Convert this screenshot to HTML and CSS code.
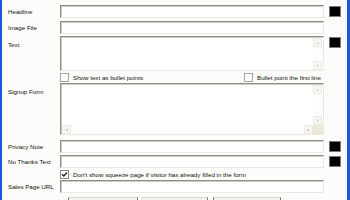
FILE: index.html
```html
<!DOCTYPE html>
<html>
<head>
    <title>Squeeze Page</title>
    <meta charset="UTF-8">
    <link rel="stylesheet" href="styles.css">
</head>
<body>
    <div class="panel">
        <div class="row r-headline">
            <span class="label">Headline</span>
            <div class="field"></div>
            <span class="swatch"></span>
        </div>
        <div class="row r-image">
            <span class="label">Image File</span>
            <div class="field"></div>
        </div>
        <div class="row r-text">
            <span class="label top">Text</span>
            <div class="area area-text">
                <div class="area-body"></div>
                <div class="vscroll">
                    <span class="sbtn">&#9650;</span>
                    <span class="track"></span>
                    <span class="sbtn">&#9660;</span>
                </div>
            </div>
            <span class="swatch top"></span>
        </div>
        <div class="row r-bullets">
            <span></span>
            <div class="checks">
                <label class="check"><span class="box"></span>Show text as bullet points</label>
                <label class="check"><span class="box"></span>Bullet point the first line</label>
            </div>
        </div>
        <div class="row r-signup">
            <span class="label top">Signup Form</span>
            <div class="area area-signup">
                <div class="area-main">
                    <div class="area-body"></div>
                    <div class="vscroll">
                        <span class="sbtn">&#9650;</span>
                        <span class="track"></span>
                        <span class="sbtn">&#9660;</span>
                    </div>
                </div>
                <div class="hscroll">
                    <span class="sbtn">&#9664;</span>
                    <span class="track"></span>
                    <span class="sbtn">&#9654;</span>
                    <span class="corner"></span>
                </div>
            </div>
        </div>
        <div class="row r-privacy">
            <span class="label">Privacy Note</span>
            <div class="field"></div>
            <span class="swatch"></span>
        </div>
        <div class="row r-nothanks">
            <span class="label">No Thanks Text</span>
            <div class="field"></div>
            <span class="swatch"></span>
        </div>
        <div class="row r-dontshow">
            <span></span>
            <label class="check"><span class="box checked"><svg width="7" height="7" viewBox="0 0 7 7"><path d="M1 3.2 L2.8 5 L6 1.5" fill="none" stroke="#222" stroke-width="1.4"/></svg></span>Don't show squeeze page if visitor has already filled in the form</label>
        </div>
        <div class="row r-sales">
            <span class="label">Sales Page URL</span>
            <div class="field"></div>
        </div>
        <div class="buttons">
            <span class="btn b1"></span>
            <span class="btn b2"></span>
            <span class="btn b3"></span>
        </div>
    </div>
</body>
</html>
```

FILE: styles.css
```css
body { margin: 0; background: #fcfcfa; font-family: "Liberation Sans", Arial, sans-serif; font-size: 6.2px; color: #111; overflow: hidden; }
.panel { width: 350px; height: 200px; box-sizing: border-box; border-left: 2px solid #1d56d8; border-right: 3px solid #1d56d8; padding-top: 5px; background: #fcfcfa; }
.row { display: grid; grid-template-columns: 58px 264px 17px; align-items: center; }
.label { padding-left: 6px; white-space: nowrap; }
.label.top { align-self: start; padding-top: 5px; }
.field { height: 13px; box-sizing: border-box; background: #fff; border: 1px solid; border-color: #8d8b82 #ebe8e4 #ebe8e4 #8d8b82; box-shadow: inset 1px 1px 0 #cfccc4; }
.swatch { justify-self: end; width: 10px; height: 9px; background: #000; border: 1px solid #7a7a7a; }
.swatch.top { align-self: start; margin-top: 1px; }

.r-image { margin-top: 3px; }
.r-text { margin-top: 2px; }
.r-bullets { height: 12px; }
.r-privacy { margin-top: 5px; }
.r-nothanks { margin-top: 2px; }
.r-dontshow { height: 12px; }
.r-sales { margin-top: 0; }

.area { box-sizing: border-box; background: #fff; border: 1px solid; border-color: #8d8b82 #ebe8e4 #ebe8e4 #8d8b82; box-shadow: inset 1px 1px 0 #cfccc4; display: flex; flex-direction: column; }
.area-text { height: 35px; flex-direction: row; }
.area-signup { height: 52px; }
.area-main { flex: 1; display: flex; }
.area-body { flex: 1; }
.vscroll { width: 10px; display: flex; flex-direction: column; margin: 1px 0 0; }
.hscroll { height: 9px; display: flex; margin-left: 1px; }
.sbtn { width: 9px; height: 9px; box-sizing: border-box; border: 1px solid #ecebe4; background: #f6f6f2; color: #cfcfc8; font-size: 4px; line-height: 7px; text-align: center; }
.vscroll .track { flex: 1; background: #fdfdfb; }
.hscroll .track { flex: 1; background: #fdfdfb; }
.corner { width: 10px; background: #ece9d8; }

.checks { display: flex; justify-content: space-between; padding-right: 3px; }
.check { display: flex; align-items: center; white-space: nowrap; }
.box { width: 7px; height: 7px; margin-right: 4px; border: 1px solid #a6a49c; background: #fff; display: inline-flex; align-items: center; justify-content: center; }
.box.checked { border-color: #8a887f; }

.buttons { display: flex; margin-top: 4px; padding-left: 66px; }
.btn { height: 10px; box-sizing: border-box; border: 1px solid #777; border-top-color: #d8d6ce; background: #f4f3ee; }
.b1 { width: 70px; }
.b2 { width: 67px; margin-left: 3px; border-left-color: #e8e6df; }
.b3 { width: 68px; margin-left: 5px; }
```
